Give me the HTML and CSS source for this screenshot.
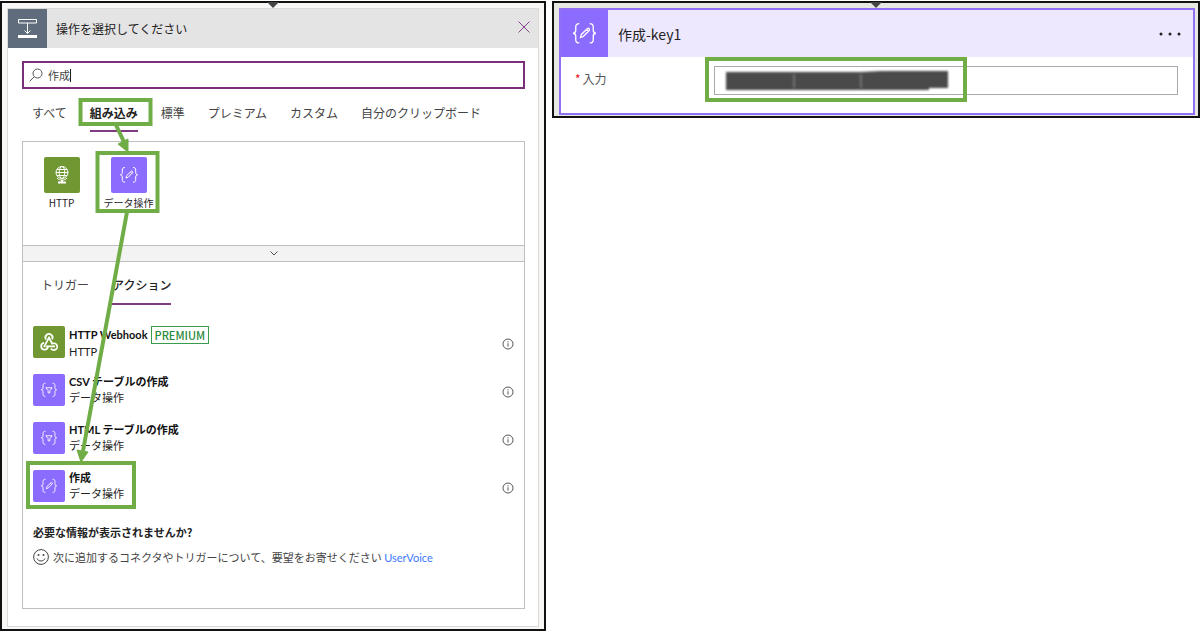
FILE: index.html
```html
<!DOCTYPE html>
<html lang="ja">
<head>
    <meta charset="UTF-8">
    <meta name="viewport" content="width=device-width, initial-scale=1.0">
    <title>操作を選択してください</title>
    <link rel="stylesheet" href="styles.css">
</head>
<body>
    <!-- Shared icons -->
    <svg class="defs" width="0" height="0" aria-hidden="true">
        <symbol id="braces" viewBox="0 0 36 36">
            <path d="M14 10.500c-2 0-2.700.8-2.700 2.500v2.600c0 1.300-.7 2.100-2 2.200 1.300.1 2 .9 2 2.200v2.700c0 1.700.7 2.500 2.700 2.500M22 10.500c2 0 2.700.8 2.700 2.500v2.600c0 1.300.7 2.100 2 2.200-1.300.1-2 .9-2 2.200v2.700c0 1.700-.7 2.500-2.700 2.500"/>
        </symbol>
        <symbol id="compose" viewBox="0 0 36 36">
            <use href="#braces"/>
            <path d="M15 21l.6-2.300 4.700-4.500c.8-.6 2 .6 1.300 1.500l-4.500 4.600zM19.500 15l1.500 1.500"/>
        </symbol>
        <symbol id="table" viewBox="0 0 36 36">
            <use href="#braces"/>
            <path d="M14.500 15.500h7l-2.500 3.200v2.600h-2v-2.600z"/>
        </symbol>
        <symbol id="info" viewBox="0 0 12 12">
            <circle cx="6" cy="6" r="5"/>
            <path d="M6 5.300v3.300M6 3.300v1.100"/>
        </symbol>
    </svg>

    <main class="page">
        <section class="frame">
            <svg class="flow-arrow" viewBox="0 0 12 8"><path d="M0 0h12L6 6z"/></svg>
            <div class="card">
                <header class="card-header">
                    <div class="header-icon">
                        <svg viewBox="0 0 39 39">
                            <path d="M10.500 10.500h18v3.500h-18zM19.500 14v10.500M16.500 21.500l3 3 3-3"/>
                            <path class="solid" d="M10 26h19v3H10z"/>
                        </svg>
                    </div>
                    <h1>操作を選択してください</h1>
                    <button class="close-btn" aria-label="閉じる">
                        <svg viewBox="0 0 12 12"><path d="M.5.500l11 11M11.500.500l-11 11"/></svg>
                    </button>
                </header>

                <div class="card-body">
                    <div class="search">
                        <svg viewBox="0 0 14 14"><circle cx="8.500" cy="5.500" r="4.500"/><path d="M5.300 8.700L.7 13.300"/></svg>
                        <input type="text" value="作成" aria-label="検索">
                        <span class="caret"></span>
                    </div>

                    <nav class="tabs">
                        <button>すべて</button>
                        <button class="active">組み込み</button>
                        <button>標準</button>
                        <button>プレミアム</button>
                        <button>カスタム</button>
                        <button>自分のクリップボード</button>
                    </nav>

                    <div class="results">
                        <div class="connectors">
                            <button class="connector">
                                <span class="tile green">
                                    <svg viewBox="0 0 36 36"><circle cx="18" cy="15.500" r="6"/><ellipse cx="18" cy="15.500" rx="2.800" ry="6"/><path d="M12 15.500h12M13 12.500h10M13 18.500h10M13 21c2.500 2.800 7.500 2.800 10 0"/><path class="stand" d="M18 23v3M14 25.500h8"/></svg>
                                </span>
                                HTTP
                            </button>
                            <button class="connector">
                                <span class="tile purple"><svg><use href="#compose"/></svg></span>
                                データ操作
                            </button>
                        </div>

                        <button class="collapse-bar" aria-label="折りたたむ">
                            <svg viewBox="0 0 8 5"><path d="M.5.500L4 4 7.500.500"/></svg>
                        </button>

                        <nav class="tabs sub-tabs">
                            <button>トリガー</button>
                            <button class="current">アクション</button>
                        </nav>

                        <ul class="actions">
                            <li>
                                <span class="tile green">
                                    <svg class="hook" viewBox="0 0 36 36">
                                        <path d="M14.700 15.300a4 4 0 1 1 6.800-.4M18 13l4 7.500M18 13l-4.500 8.500"/>
                                        <path d="M21.500 20a3.800 3.800 0 1 1-1.300 5.300M23 23h-8.500"/>
                                        <path d="M12.500 19a3.800 3.800 0 1 0 4.300 4"/>
                                        <circle class="dot" cx="18" cy="13" r="1.300"/><circle class="dot" cx="13" cy="22.700" r="1.300"/><circle class="dot" cx="23.500" cy="23" r="1.300"/>
                                    </svg>
                                </span>
                                <div class="action-text">
                                    <strong>HTTP Webhook <span class="badge">PREMIUM</span></strong>
                                    <span>HTTP</span>
                                </div>
                                <button class="info-btn" aria-label="情報"><svg><use href="#info"/></svg></button>
                            </li>
                            <li>
                                <span class="tile purple"><svg><use href="#table"/></svg></span>
                                <div class="action-text">
                                    <strong>CSV テーブルの作成</strong>
                                    <span>データ操作</span>
                                </div>
                                <button class="info-btn" aria-label="情報"><svg><use href="#info"/></svg></button>
                            </li>
                            <li>
                                <span class="tile purple"><svg><use href="#table"/></svg></span>
                                <div class="action-text">
                                    <strong>HTML テーブルの作成</strong>
                                    <span>データ操作</span>
                                </div>
                                <button class="info-btn" aria-label="情報"><svg><use href="#info"/></svg></button>
                            </li>
                            <li>
                                <span class="tile purple"><svg><use href="#compose"/></svg></span>
                                <div class="action-text">
                                    <strong>作成</strong>
                                    <span>データ操作</span>
                                </div>
                                <button class="info-btn" aria-label="情報"><svg><use href="#info"/></svg></button>
                            </li>
                        </ul>

                        <div class="feedback">
                            <h2>必要な情報が表示されませんか?</h2>
                            <p>
                                <svg viewBox="0 0 16 16"><circle cx="8" cy="8" r="7.400"/><path d="M4 9.500c1.200 3.300 6.800 3.300 8 0"/><circle class="eye" cx="5.500" cy="6" r="1"/><circle class="eye" cx="10.500" cy="6" r="1"/></svg>
                                <span>次に追加するコネクタやトリガーについて、要望をお寄せください <a href="#">UserVoice</a></span>
                            </p>
                        </div>
                    </div>
                </div>
            </div>

            <!-- Green guide boxes and arrows -->
            <svg class="guide" width="546" height="631" viewBox="0 1 546 631">
                <rect x="80.500" y="100" width="70" height="24"/>
                <rect x="97.500" y="153" width="60" height="58"/>
                <rect x="28" y="463" width="106" height="44"/>
                <path d="M116 125l8 17M127 212L83 451"/>
                <path class="head" d="M128 152l-10-8 10-5zM81 462l-4-12 11 2z"/>
            </svg>
        </section>

        <section class="frame frame-step">
            <svg class="flow-arrow" viewBox="0 0 12 8"><path d="M0 0h12L6 6z"/></svg>
            <div class="step">
                <header class="step-header">
                    <div class="step-icon"><svg><use href="#compose"/></svg></div>
                    <h2>作成-key1</h2>
                    <button class="menu-btn" aria-label="メニュー">
                        <svg viewBox="0 0 22 4"><circle cx="2" cy="2" r="1.500"/><circle cx="11" cy="2" r="1.500"/><circle cx="20" cy="2" r="1.500"/></svg>
                    </button>
                </header>
                <div class="step-body">
                    <label for="inputs"><span class="required">*</span>入力</label>
                    <div class="field">
                        <input type="text" id="inputs">
                        <svg class="redacted" width="224" height="20" viewBox="0 0 224 20">
                            <path d="M1 1h135l20-1h67v17h-19v2H1z"/>
                            <path class="seam" d="M69 3v14M136 3v14"/>
                        </svg>
                    </div>
                </div>
            </div>
            <svg class="guide" width="420" height="117" viewBox="552 1 420 117">
                <rect x="707" y="59" width="258" height="41"/>
            </svg>
        </section>
    </main>
</body>
</html>
```
FILE: styles.css
```css
* {
    box-sizing: border-box;
}
body {
    margin: 0;
    background-color: #fff;
    color: #222;
    font-family: "Noto Sans CJK JP", sans-serif;
    font-size: 11px;
    line-height: 16px;
}
h1, h2, p, ul {
    margin: 0;
    padding: 0;
}
button {
    padding: 0;
    border: none;
    background: none;
    color: inherit;
    font: inherit;
    cursor: pointer;
}
svg {
    display: block;
    fill: none;
    stroke: currentColor;
}
.defs {
    position: absolute;
}
.page {
    display: grid;
    grid-template-columns: 546fr 648fr;
    gap: 6px;
    align-items: start;
    padding-top: 1px;
}
.frame {
    position: relative;
    padding: 5px 5px 2px;
    border: 2px solid #111;
    background-color: #f8f7f5;
}
.flow-arrow {
    position: absolute;
    top: -1px;
    left: 50%;
    width: 12px;
    margin-left: -6px;
    fill: #444;
    stroke: none;
}
.guide {
    position: absolute;
    top: -2px;
    left: -2px;
    stroke: #70ad47;
    stroke-width: 4;
    pointer-events: none;
}
.guide .head {
    fill: #70ad47;
    stroke-width: 1;
}

/* Operation picker */
.card {
    border: 1px solid #dcdad8;
    background-color: #fff;
}
.card-header {
    display: flex;
    align-items: center;
    padding-right: 8px;
    background-color: #e4e4e4;
}
.card-header h1 {
    flex: 1;
    margin-left: 9px;
    font-size: 12px;
    font-weight: 400;
}
.header-icon {
    width: 39px;
    height: 39px;
    background-color: #5f6c7b;
    color: #fff;
}
.solid {
    fill: #fff;
    stroke: none;
}
.close-btn {
    color: #85408a;
}
.close-btn svg {
    width: 12px;
    height: 12px;
    margin-bottom: 4px;
}
.card-body {
    padding: 13px 13px 17px 14px;
}
.search {
    display: flex;
    align-items: center;
    height: 28px;
    padding: 0 5px;
    border: 2px solid #7b2f7b;
    color: #555;
}
.search svg {
    width: 14px;
    height: 14px;
}
.search input {
    width: 22px;
    margin-left: 5px;
    padding: 0;
    border: none;
    outline: none;
    color: #444;
    font: inherit;
}
.caret {
    width: 1px;
    height: 13px;
    background-color: #222;
}
.tabs {
    display: flex;
    gap: 23px;
    margin-top: 14px;
    padding-left: 10px;
    color: #444;
    font-size: 12px;
    line-height: 20px;
}
.tabs button {
    padding-bottom: 7px;
    border-bottom: 2px solid transparent;
    white-space: nowrap;
}
.tabs .active {
    border-color: #7f3a80;
    color: #222;
    font-weight: 700;
}
.tabs .current {
    border-color: #7f3a80;
    color: #222;
    font-weight: 500;
}
.results {
    margin-top: 9px;
    border: 1px solid #bfbfbf;
}
.connectors {
    display: flex;
    padding: 15px 5px 35px;
}
.connector {
    width: 67px;
    font-size: 10px;
    line-height: 14px;
}
.connector .tile {
    width: 36px;
    height: 36px;
    margin: 0 auto 3px;
}
.tile {
    display: block;
    flex: none;
    width: 32px;
    height: 32px;
    border-radius: 2px;
    color: #fff;
}
.tile svg {
    width: 100%;
    height: 100%;
}
.green {
    background-color: #709732;
}
.purple {
    background-color: #8c6cff;
}
.stand {
    stroke-width: 2;
}
.hook {
    stroke-width: 2;
}
.dot {
    fill: #fff;
    stroke: none;
}
.collapse-bar {
    display: flex;
    align-items: center;
    justify-content: center;
    width: 100%;
    height: 17px;
    border-top: 1px solid #bfbfbf;
    border-bottom: 1px solid #bfbfbf;
    background-color: #f3f3f3;
    color: #555;
}
.collapse-bar svg {
    width: 8px;
    height: 5px;
}
.sub-tabs {
    margin-top: 13px;
    padding-left: 18px;
}
.sub-tabs button {
    padding-bottom: 8px;
}
.actions {
    margin-top: 21px;
    padding: 0 10px;
    list-style: none;
}
.actions li {
    display: flex;
    align-items: flex-start;
    min-height: 48px;
}
.action-text {
    display: flex;
    flex: 1;
    flex-direction: column;
    margin-left: 4px;
    font-family: Lato, "Noto Sans CJK JP", sans-serif;
}
.action-text strong {
    display: flex;
    align-items: center;
    gap: 3px;
    color: #111;
}
.badge {
    padding: 0 3px;
    border: 1px solid #3a9a4b;
    color: #2a8a3c;
    font-family: "Noto Sans CJK JP", sans-serif;
    font-weight: 500;
}
.info-btn {
    margin-top: 12px;
    color: #555;
}
.info-btn svg {
    width: 12px;
    height: 12px;
}
.feedback {
    margin-top: 6px;
    padding: 0 10px 42px;
}
.feedback h2 {
    font-size: 11px;
    font-weight: 700;
}
.feedback p {
    display: flex;
    gap: 4px;
    margin-top: 9px;
    color: #444;
}
.feedback svg {
    flex: none;
    width: 16px;
    height: 16px;
}
.eye {
    fill: #444;
    stroke: none;
}
.feedback a {
    color: #3b78ff;
    font-family: Lato, sans-serif;
    text-decoration: none;
}

/* Compose step */
.frame-step {
    padding: 5px 3px 1px 5px;
    background-color: #e8e8e2;
}
.step {
    border: 2px solid #9270f5;
    background-color: #fff;
}
.step-header {
    display: flex;
    align-items: center;
    padding-right: 12px;
    background-color: #eee8ff;
}
.step-header h2 {
    flex: 1;
    margin-left: 10px;
    font-size: 14px;
    font-weight: 400;
}
.step-icon {
    width: 47px;
    height: 47px;
    background-color: #8c6cff;
    color: #fff;
}
.step-icon svg {
    width: 47px;
    height: 47px;
}
.menu-btn svg {
    width: 22px;
    height: 4px;
    fill: #222;
    stroke: none;
}
.step-body {
    display: flex;
    padding: 9px 15px 18px 14px;
}
.step-body label {
    width: 139px;
    color: #555;
    font-size: 12px;
    line-height: 26px;
}
.required {
    margin-right: 2px;
    color: #e81123;
}
.field {
    position: relative;
    flex: 1;
}
.field input {
    display: block;
    width: 100%;
    height: 29px;
    border: 1px solid #aaa;
}
.redacted {
    position: absolute;
    top: 5px;
    left: 11px;
    fill: #4a4a4a;
    stroke: none;
    filter: blur(1px);
}
.redacted .seam {
    stroke: #999;
}
```
